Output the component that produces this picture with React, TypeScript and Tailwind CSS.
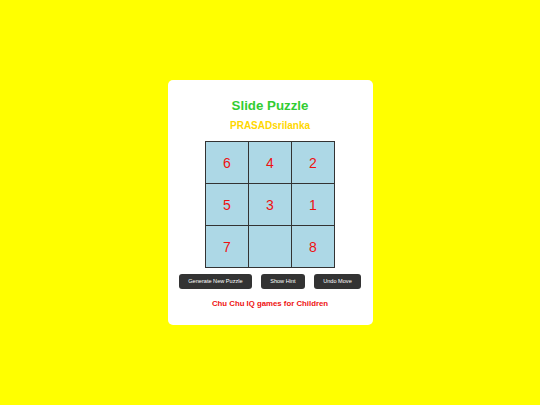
import { useState } from "react";

const START = [6, 4, 2, 5, 3, 1, 7, 0, 8];

export default function App() {
  const [tiles] = useState<number[]>(START);

  return (
    <div
      className="h-screen w-full bg-[#ffff00] flex items-center justify-center"
      style={{ fontFamily: '"Liberation Sans", Arial, sans-serif' }}
    >
      <div className="w-[205px] bg-white rounded-[5px] pt-[19px] pb-[17px] flex flex-col items-center">
        <h1 className="text-[13.3px] font-bold leading-none text-[#32cd32]">Slide Puzzle</h1>
        <h2 className="mt-[8px] text-[10px] font-bold leading-none text-[#ffd700]">PRASADsrilanka</h2>

        <div className="mt-[10.6px] grid grid-cols-[repeat(3,42px)] grid-rows-[repeat(3,41px)] gap-px p-px bg-[#333]">
          {tiles.map((n, i) => (
            <div
              key={i}
              className="bg-[#add8e6] flex items-center justify-center text-[14px] leading-none text-[#ee1111]"
            >
              {n !== 0 ? n : ""}
            </div>
          ))}
        </div>

        <div className="mt-[5.7px] flex">
          <button className="mx-[4.5px] h-[15px] px-[9px] rounded-[3px] bg-[#333] text-white text-[5.6px] leading-none">
            Generate New Puzzle
          </button>
          <button className="mx-[4.5px] h-[15px] px-[9.5px] rounded-[3px] bg-[#333] text-white text-[5.6px] leading-none">
            Show Hint
          </button>
          <button className="mx-[4.5px] h-[15px] px-[9px] rounded-[3px] bg-[#333] text-white text-[5.6px] leading-none">
            Undo Move
          </button>
        </div>

        <p className="mt-[11px] text-[7.8px] font-bold leading-none text-[#ee1111]">Chu Chu IQ games for Children</p>
      </div>
    </div>
  );
}
